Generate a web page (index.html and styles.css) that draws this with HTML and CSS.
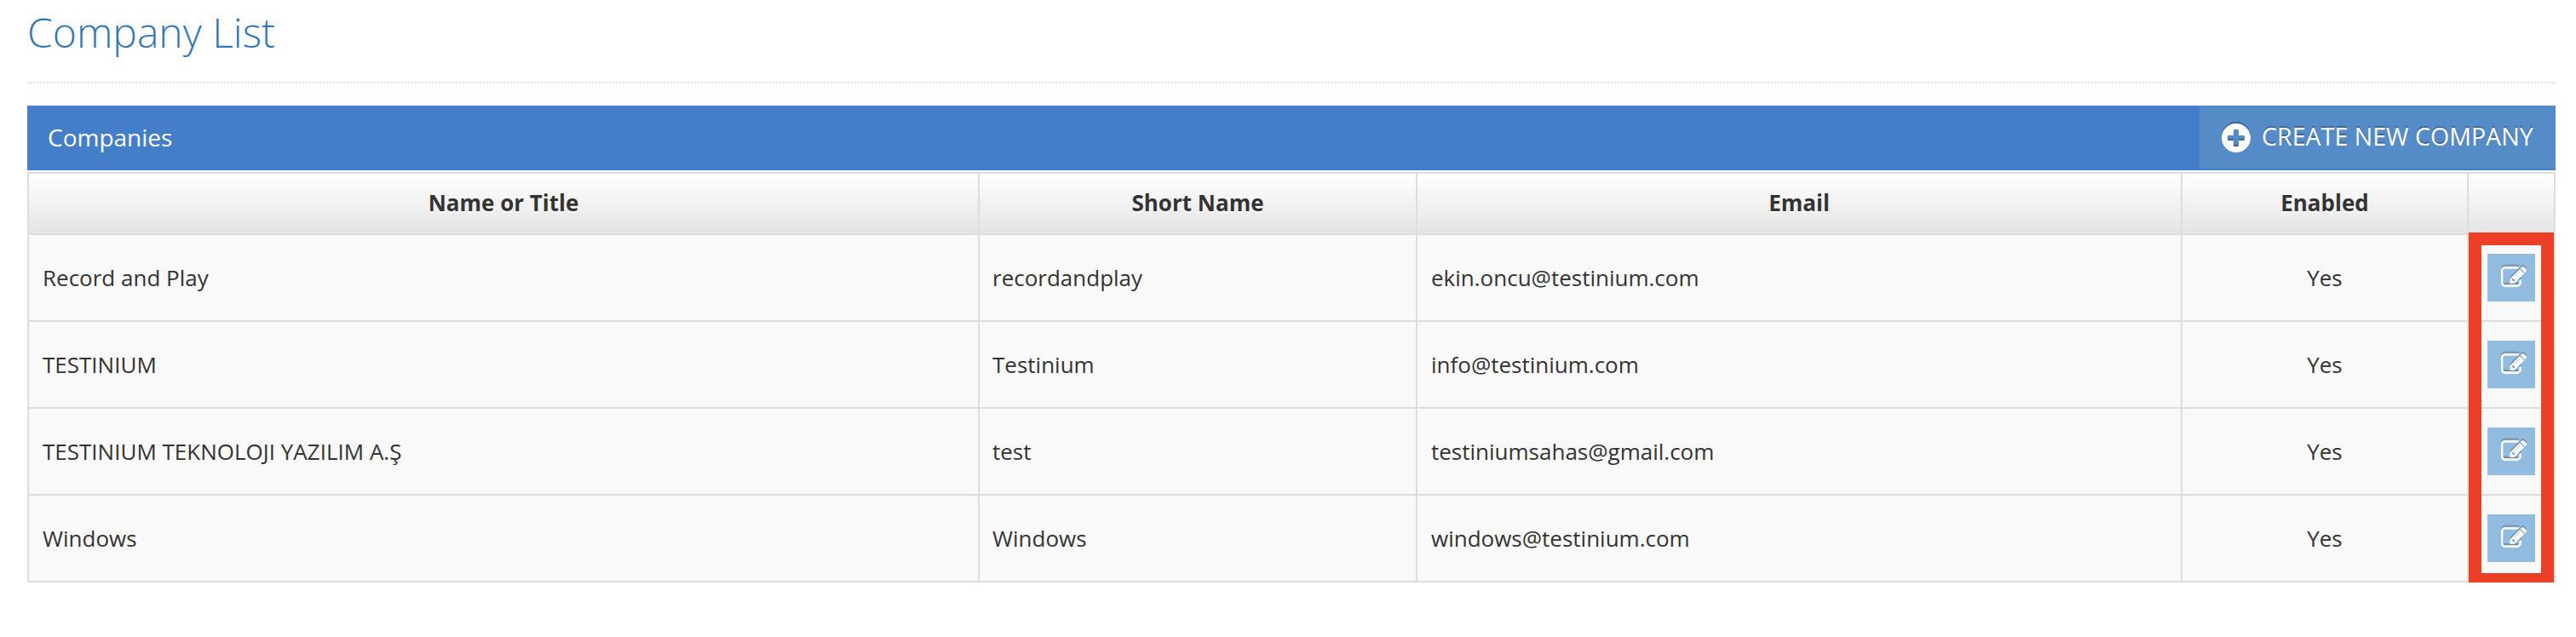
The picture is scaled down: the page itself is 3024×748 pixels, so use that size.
FILE: index.html
```html
<!DOCTYPE html>
<html lang="en">
<head>
<meta charset="utf-8">
<title>Company List</title>
<link rel="stylesheet" href="styles.css">
</head>
<body>
<svg class="sprite" aria-hidden="true">
  <symbol id="edit" viewBox="0 0 1792 1792"><path d="M888 1184l116-116-152-152-116 116v56h96v96h56zm440-720q-16-16-33 1l-350 350q-17 17-1 33t33-1l350-350q17-17 1-33zm80 594v190q0 119-84.5 203.5t-203.5 84.5h-832q-119 0-203.5-84.5t-84.5-203.5v-832q0-119 84.5-203.5t203.5-84.5h832q63 0 117 25 15 7 18 23 3 17-9 29l-49 49q-14 14-32 8-23-6-45-6h-832q-66 0-113 47t-47 113v832q0 66 47 113t113 47h832q66 0 113-47t47-113v-126q0-13 9-22l64-64q15-15 35-7t20 29zm-96-738l288 288-672 672h-288v-288zm444 132l-92 92-288-288 92-92q28-28 68-28t68 28l152 152q28 28 28 68t-28 68z"/></symbol>
</svg>
<main class="page">
  <h1 class="page-title">Company List</h1>
  <section>
    <div class="bar">
      <span class="bar-title">Companies</span>
      <a class="create">
        <svg class="plus" viewBox="0 0 34 34"><path fill-rule="evenodd" d="M17 0a17 17 0 1 0 0 34a17 17 0 1 0 0-34zM15.200 7h3.600a1.200 1.200 0 0 1 1.200 1.200V14h5.800a1.200 1.200 0 0 1 1.200 1.200v3.600a1.200 1.200 0 0 1-1.200 1.200H20v5.800a1.200 1.200 0 0 1-1.200 1.200h-3.600a1.200 1.200 0 0 1-1.200-1.200V20H8.200A1.200 1.200 0 0 1 7 18.800v-3.600A1.200 1.200 0 0 1 8.200 14H14V8.200A1.200 1.200 0 0 1 15.200 7z"/></svg>
        <span>CREATE NEW COMPANY</span>
      </a>
    </div>
    <div class="table">
      <div class="grid">
        <div class="th">Name or Title</div><div class="th">Short Name</div><div class="th">Email</div><div class="th">Enabled</div><div class="th"></div>
        <div class="td">Record and Play</div><div class="td">recordandplay</div><div class="td">ekin.oncu@testinium.com</div><div class="td mid">Yes</div><div class="td mid"><a class="btn"><svg class="pen"><use href="#edit"/></svg></a></div>
        <div class="td">TESTINIUM</div><div class="td">Testinium</div><div class="td">info@testinium.com</div><div class="td mid">Yes</div><div class="td mid"><a class="btn"><svg class="pen"><use href="#edit"/></svg></a></div>
        <div class="td">TESTINIUM TEKNOLOJI YAZILIM A.Ş</div><div class="td">test</div><div class="td">testiniumsahas@gmail.com</div><div class="td mid">Yes</div><div class="td mid"><a class="btn"><svg class="pen"><use href="#edit"/></svg></a></div>
        <div class="td">Windows</div><div class="td">Windows</div><div class="td">windows@testinium.com</div><div class="td mid">Yes</div><div class="td mid"><a class="btn"><svg class="pen"><use href="#edit"/></svg></a></div>
      </div>
      <div class="highlight"></div>
    </div>
  </section>
</main>
</body>
</html>
```
FILE: styles.css
```css
* { box-sizing: border-box; }
body {
  margin: 0;
  background: #fff;
  color: #333;
  font: 26px/40px "Open Sans", sans-serif;
}
.sprite { display: none; }
.page { padding: 0 24px 0 32px; }
.page-title {
  margin: 0 0 26px;
  height: 98px;
  padding-top: 9px;
  border-bottom: 2px dotted #e2e2e2;
  color: #3577b3;
  font-size: 48px;
  font-weight: 300;
  line-height: 58px;
}
.bar {
  display: flex;
  justify-content: space-between;
  height: 76px;
  padding: 0 0 2px 24px;
  margin-bottom: 2px;
  background: #447ec8;
  color: #fff;
  font-size: 28px;
  line-height: 74px;
}
.create {
  display: flex;
  align-items: center;
  gap: 13px;
  width: 418px;
  padding-left: 26px;
  background: #558bc7;
  font-size: 28.6px;
  line-height: 72px;
  text-shadow: 0 -2px 0 rgba(0, 0, 0, .25);
  white-space: nowrap;
}
.create span { margin-top: -2px; }
.plus {
  width: 34px;
  height: 34px;
  margin-top: 2px;
  fill: #fff;
  overflow: visible;
  filter: drop-shadow(0 -2px 0 rgba(0, 0, 0, .25));
}
.table { position: relative; }
.grid {
  display: grid;
  grid-template-columns: 1116px 514px 898px 336px 100px;
  grid-template-rows: 72px repeat(4, 102px);
  border: 2px solid #ddd;
  border-bottom: 0;
}
.th, .td {
  display: flex;
  align-items: center;
  padding: 0 16px;
  border-bottom: 2px solid #ddd;
  border-right: 2px solid #ddd;
}
.th:nth-child(5n), .td:nth-child(5n) { border-right: 0; }
.th {
  justify-content: center;
  padding-bottom: 2px;
  background: linear-gradient(#fff, #e4e4e4);
  font-weight: 700;
  text-shadow: 0 2px 0 #fff;
}
.td { background: #f9f9f9; }
.td:nth-child(5n + 2) { padding-left: 15px; }
.mid { justify-content: center; }
.btn {
  display: flex;
  flex: none;
  align-items: center;
  justify-content: center;
  width: 56px;
  height: 56px;
  padding: 0 0 1px 5px;
  background: #91bbdf;
}
.pen {
  width: 30px;
  height: 30px;
  fill: #fff;
  stroke: #fff;
  stroke-width: 36px;
  overflow: visible;
  filter: drop-shadow(0 -2px 0 rgba(0, 0, 0, .25));
}
.highlight {
  position: absolute;
  top: 71px;
  right: 2px;
  bottom: -4px;
  width: 100px;
  border: 15px solid #ec4026;
}
```
